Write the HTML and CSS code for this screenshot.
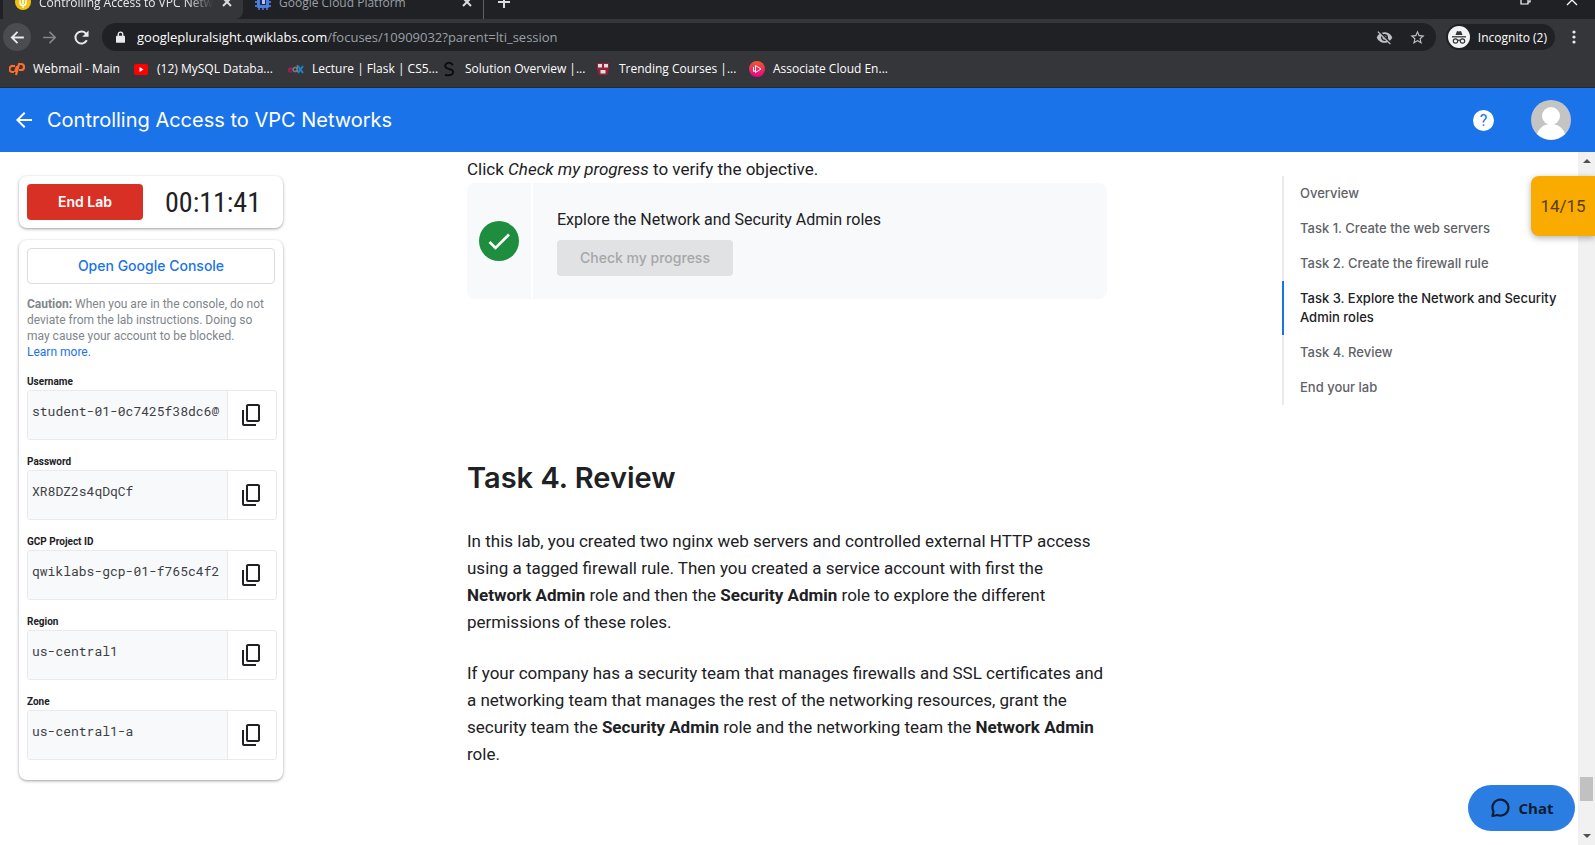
FILE: index.html
```html
<!DOCTYPE html>
<html lang="en">
<head>
<meta charset="utf-8">
<title>Controlling Access to VPC Networks</title>
<link rel="stylesheet" href="styles.css">
</head>
<body>
<svg class="defs" width="0" height="0" aria-hidden="true">
  <symbol id="i-copy" viewBox="0 0 24 24"><path fill="currentColor" d="M18 1H8C6.9 1 6 1.900 6 3v14c0 1.100.9 2 2 2h10c1.100 0 2-.9 2-2V3c0-1.100-.9-2-2-2zm0 16H8V3h10v14zM2 7h2v14h12v2H4c-1.100 0-2-.9-2-2V7z"/></symbol>
  <symbol id="i-x" viewBox="0 0 12 12"><path d="M2 2l8 8M10 2l-8 8" fill="none" stroke="currentColor" stroke-width="2"/></symbol>
  <symbol id="i-back" viewBox="0 0 24 24"><path fill="currentColor" d="M20 11H7.800l5.600-5.600L12 4l-8 8 8 8 1.400-1.400L7.800 13H20z"/></symbol>
</svg>
<header class="browser">
  <div class="tabs">
    <div class="tab tab-on">
      <svg class="fav" viewBox="0 0 16 16"><circle cx="8" cy="8" r="8" fill="#f4c20d"/><path d="M8 3v7M5 4v4.500a3 3 0 0 0 6 0V4M8 12v2" fill="none" stroke="#fff" stroke-width="1.500"/></svg>
      <span class="tab-name fade">Controlling Access to VPC Networks</span>
      <button class="tab-x" aria-label="Close tab"><svg viewBox="0 0 12 12"><use href="#i-x"/></svg></button>
    </div>
    <div class="tab">
      <svg class="fav" viewBox="0 0 16 16"><path d="M4 0v16M8 0v16M12 0v16M0 4h16M0 8h16M0 12h16" stroke="#5c8df0" stroke-width="1.300"/><rect x="2" y="2" width="12" height="12" rx="1" fill="#4a7de0"/><rect x="5" y="5" width="6" height="6" fill="#202a44"/><rect x="7" y="6" width="3" height="4" fill="#a9c4ff"/></svg>
      <span class="tab-name">Google Cloud Platform</span>
      <button class="tab-x" aria-label="Close tab"><svg viewBox="0 0 12 12"><use href="#i-x"/></svg></button>
    </div>
    <button class="new-tab" aria-label="New tab"><svg viewBox="0 0 14 14"><path d="M7 1v12M1 7h12" stroke="currentColor" stroke-width="2"/></svg></button>
    <div class="win">
      <button aria-label="Restore"><svg viewBox="0 0 12 12"><path d="M1 3h7v7H1zM3 3V1h7v7H8" fill="none" stroke="currentColor" stroke-width="1.200"/></svg></button>
      <button aria-label="Close window"><svg viewBox="0 0 12 12"><path d="M1 1l10 10M11 1L1 11" stroke="currentColor" stroke-width="1.300"/></svg></button>
    </div>
  </div>
  <div class="toolbar">
    <button class="nav-btn nav-on" aria-label="Back"><svg viewBox="0 0 24 24"><path d="M21 12H4M12 4l-8 8 8 8" fill="none" stroke="currentColor" stroke-width="2.600"/></svg></button>
    <button class="nav-btn dim" aria-label="Forward"><svg viewBox="0 0 24 24"><path d="M3 12h17M12 4l8 8-8 8" fill="none" stroke="currentColor" stroke-width="2.300"/></svg></button>
    <button class="nav-btn" aria-label="Reload"><svg viewBox="0 0 24 24"><path d="M19.500 16A8.500 8.500 0 1 1 18 6l2 2.500" fill="none" stroke="currentColor" stroke-width="2.800"/><path d="M22 2v9h-9z" fill="currentColor"/></svg></button>
    <div class="omni">
      <svg class="lock" viewBox="0 0 10 13"><rect y="5" width="10" height="8" rx="1" fill="#e8eaed"/><path d="M2.500 6V3.500a2.500 2.500 0 0 1 5 0V6" fill="none" stroke="#e8eaed" stroke-width="1.500"/></svg>
      <span class="url"><span class="host">googlepluralsight.qwiklabs.com</span>/focuses/10909032?parent=lti_session</span>
      <button class="omni-btn" aria-label="Third-party cookies blocked"><svg viewBox="0 0 24 24"><path fill="#bdc1c6" d="M12 7a5 5 0 0 1 5 5c0 .65-.13 1.260-.36 1.830l2.920 2.920A11.800 11.800 0 0 0 23 12c-1.730-4.390-6-7.500-11-7.500-1.400 0-2.740.25-3.980.7l2.160 2.160A4.900 4.900 0 0 1 12 7zM2 4.270l2.740 2.740A11.800 11.800 0 0 0 1 12c1.730 4.390 6 7.500 11 7.500 1.550 0 3.030-.3 4.380-.84L19.730 22 21 20.730 3.270 3zM7.530 9.800l1.550 1.550a3 3 0 0 0 3.570 3.570l1.550 1.550A5 5 0 0 1 7.530 9.800zm4.310-.78l3.150 3.150.02-.16a3 3 0 0 0-3-3z"/></svg></button>
      <button class="omni-btn" aria-label="Bookmark this tab"><svg viewBox="0 0 24 24"><path fill="#bdc1c6" d="M22 9.240l-7.190-.62L12 2 9.190 8.630 2 9.240l5.460 4.730L5.820 21 12 17.270 18.180 21l-1.630-7.030zM12 15.400l-3.760 2.270 1-4.280-3.320-2.880 4.380-.38L12 6.100l1.710 4.040 4.380.38-3.320 2.880 1 4.280z"/></svg></button>
    </div>
    <button class="incog"><svg viewBox="0 0 22 22"><circle cx="11" cy="11" r="11" fill="#f1f3f4"/><path d="M7.500 9L9 5l2 .6L13 5l1.500 4z" fill="#35363a"/><path d="M4 10.800h14" stroke="#35363a" stroke-width="1.300"/><g fill="none" stroke="#35363a" stroke-width="1.200"><circle cx="7.500" cy="15" r="2.200"/><circle cx="14.500" cy="15" r="2.200"/><path d="M9.700 14.500q1.300-.8 2.600 0"/></g></svg>Incognito (2)</button>
    <button class="more" aria-label="Menu"><svg viewBox="0 0 4 14"><circle cx="2" cy="2" r="1.600"/><circle cx="2" cy="7" r="1.600"/><circle cx="2" cy="12" r="1.600"/></svg></button>
  </div>
  <nav class="marks">
    <a href="#"><svg viewBox="0 0 16 16"><path d="M6 5H4a3 3 0 0 0-1 6h2M7 14l3-11h2a3 3 0 0 1 0 6h-2M8 5L6 11" fill="none" stroke="#ff6c2c" stroke-width="2.200"/></svg>Webmail - Main</a>
    <a href="#"><svg viewBox="0 0 16 16"><rect x="1" y="3" width="14" height="11" rx="2" fill="#f00"/><path d="M6.500 6v5l4-2.500z" fill="#fff"/></svg>(12) MySQL Databa...</a>
    <a href="#"><svg viewBox="0 0 16 16"><g fill="none" stroke-width="1.600"><path d="M1 8.500h3.500a2 2 0 1 0-.5 2" stroke="#9b2155"/><path d="M9.500 4v7M9 8a2 2 0 1 0 0 1" stroke="#777b85"/><path d="M10 5l5 7M15 5l-5 7" stroke="#1c83c6" stroke-width="2"/></g></svg>Lecture | Flask | CS5...</a>
    <a href="#"><svg viewBox="0 0 16 16"><path d="M12 4Q8 0 5 3t3 5q5 1 4 4t-8 2" fill="none" stroke="#0c0c0d" stroke-width="1.800"/></svg>Solution Overview |...</a>
    <a href="#"><svg viewBox="0 0 16 16"><path d="M2 2h12v6l-2 6H4L2 8z" fill="#98203a"/><g fill="#ddd"><rect x="3" y="3" width="4" height="3.500"/><rect x="9" y="3" width="4" height="3.500"/><rect x="5.500" y="9" width="5" height="3.500"/></g></svg>Trending Courses |...</a>
    <a href="#"><svg viewBox="0 0 16 16"><defs><linearGradient id="ps" x2="0" y2="1"><stop stop-color="#f15b2a"/><stop offset="1" stop-color="#ec008c"/></linearGradient></defs><circle cx="8" cy="8" r="8" fill="url(#ps)"/><path d="M6.500 4.500v7l5.500-3.500zM4.500 6v4.500l2-1" fill="none" stroke="#fff"/></svg>Associate Cloud En...</a>
  </nav>
</header>
<header class="appbar">
  <button class="app-back" aria-label="Back"><svg viewBox="0 0 24 24"><use href="#i-back"/></svg></button>
  <h1>Controlling Access to VPC Networks</h1>
  <button class="help" aria-label="Help">?</button>
  <button class="avatar" aria-label="Account"><svg viewBox="0 0 40 40"><circle cx="20" cy="20" r="20" fill="#c4c4c4"/><circle cx="20" cy="16" r="9" fill="#fff"/><path d="M6 34c2-6 7-10 14-10s12 4 14 10a20 20 0 0 1-28 0z" fill="#fff"/></svg></button>
</header>
<div class="page">
  <aside class="side">
    <section class="card control"><button class="end">End Lab</button><span class="timer">00:11:41</span></section>
    <section class="card details">
      <button class="open">Open Google Console</button>
      <p class="caution"><b>Caution:</b> When you are in the console, do not deviate from the lab instructions. Doing so may cause your account to be blocked. <a href="#">Learn more.</a></p>
      <div class="field"><label for="f1">Username</label><div class="box"><input id="f1" readonly value="student-01-0c7425f38dc6@"><button aria-label="Copy username"><svg viewBox="0 0 24 24"><use href="#i-copy"/></svg></button></div></div>
      <div class="field"><label for="f2">Password</label><div class="box"><input id="f2" readonly value="XR8DZ2s4qDqCf"><button aria-label="Copy password"><svg viewBox="0 0 24 24"><use href="#i-copy"/></svg></button></div></div>
      <div class="field"><label for="f3">GCP Project ID</label><div class="box"><input id="f3" readonly value="qwiklabs-gcp-01-f765c4f2"><button aria-label="Copy project ID"><svg viewBox="0 0 24 24"><use href="#i-copy"/></svg></button></div></div>
      <div class="field"><label for="f4">Region</label><div class="box"><input id="f4" readonly value="us-central1"><button aria-label="Copy region"><svg viewBox="0 0 24 24"><use href="#i-copy"/></svg></button></div></div>
      <div class="field"><label for="f5">Zone</label><div class="box"><input id="f5" readonly value="us-central1-a"><button aria-label="Copy zone"><svg viewBox="0 0 24 24"><use href="#i-copy"/></svg></button></div></div>
    </section>
  </aside>
  <main class="doc">
    <p>Click <em>Check my progress</em> to verify the objective.</p>
    <section class="activity">
      <div class="status"><svg viewBox="0 0 40 40" role="img" aria-label="Completed"><circle cx="20" cy="20" r="20" fill="#1e8e3e"/><path d="M10.500 21l6 6L30 13.500" fill="none" stroke="#fff" stroke-width="2.600"/></svg></div>
      <div class="step"><span>Explore the Network and Security Admin roles</span><button disabled>Check my progress</button></div>
    </section>
    <h2>Task 4. Review</h2>
    <p>In this lab, you created two nginx web servers and controlled external HTTP access using a tagged firewall rule. Then you created a service account with first the <b>Network Admin</b> role and then the <b>Security Admin</b> role to explore the different permissions of these roles.</p>
    <p>If your company has a security team that manages firewalls and SSL certificates and a networking team that manages the rest of the networking resources, grant the security team the <b>Security Admin</b> role and the networking team the <b>Network Admin</b> role.</p>
  </main>
  <nav class="outline">
    <a href="#">Overview</a>
    <a href="#">Task 1. Create the web servers</a>
    <a href="#">Task 2. Create the firewall rule</a>
    <a href="#" class="current">Task 3. Explore the Network and Security Admin roles</a>
    <a href="#">Task 4. Review</a>
    <a href="#">End your lab</a>
  </nav>
  <div class="scroll"><i class="up"></i><i class="thumb"></i><i class="down"></i></div>
  <div class="score">14/15</div>
  <button class="chat"><svg viewBox="0 0 20 20"><path d="M2.500 18l1-4.500a8 8 0 1 1 4 3.500z" fill="none" stroke="currentColor" stroke-width="2.200" stroke-linejoin="round"/></svg>Chat</button>
</div>
</body>
</html>
```
FILE: styles.css
```css
* { box-sizing: border-box; }
body { margin: 0; height: 100vh; display: flex; flex-direction: column; overflow: hidden; background: #fff; color: #202124; font-family: Roboto, "Liberation Sans", sans-serif; }
.defs { position: absolute; }
button { border: 0; padding: 0; background: none; color: inherit; font: inherit; }
svg { display: block; flex: none; }
a { color: #1a73e8; text-decoration: none; }

.browser { flex: none; background: #35363a; color: #e8eaed; font-family: "Open Sans", "Noto Sans", sans-serif; font-size: 12px; border-bottom: 1px solid #28292c; }
.tabs { display: flex; align-items: flex-end; height: 19px; overflow: hidden; background: #202124; padding-left: 3px; }
.tab { flex: none; display: flex; align-items: center; gap: 8px; width: 240px; height: 34px; padding: 0 10px 0 12px; color: #9aa0a6; }
.tab-on { background: #35363a; color: #e8eaed; border-radius: 0 0 8px 0; }
.fav { width: 16px; height: 16px; }
.tab-name { flex: 1; white-space: nowrap; overflow: hidden; }
.fade { mask-image: linear-gradient(90deg, #000 85%, transparent); }
.tab-x svg { width: 12px; height: 12px; }
.tab-x { color: #dadce0; }
.new-tab { flex: none; height: 34px; padding: 0 13px; border-left: 1px solid #5f6368; color: #dadce0; }
.new-tab svg { width: 14px; height: 14px; }
.win { margin-left: auto; flex: none; display: flex; gap: 34px; height: 38px; align-items: center; padding-right: 17px; color: #fff; }
.win svg { width: 12px; height: 12px; }

.toolbar { display: flex; align-items: center; height: 36px; padding: 0 16px 0 3px; }
.nav-btn { flex: none; width: 28px; height: 28px; border-radius: 14px; display: grid; place-items: center; margin-right: 4px; color: #e8eaed; }
.nav-btn svg { width: 17px; height: 17px; }
.nav-on { background: #4b4c50; }
.dim { color: #85878b; }
.omni { flex: 1; min-width: 0; display: flex; align-items: center; gap: 12px; height: 28px; margin: 0 10px 0 3px; padding: 0 10px 0 14px; border-radius: 14px; background: #202124; }
.lock { width: 9px; height: 12px; }
.url { flex: 1; min-width: 0; white-space: nowrap; overflow: hidden; font-size: 13px; color: #9aa0a6; }
.host { color: #fff; }
.omni-btn svg { width: 17px; height: 17px; }
.omni-btn { margin-left: 4px; }
.incog { flex: none; display: flex; align-items: center; gap: 8px; height: 26px; padding: 0 8px 0 2px; border-radius: 13px; background: #202124; color: #fff; }
.incog svg { width: 22px; height: 22px; }
.more { margin-left: 14px; padding: 0 3px; }
.more svg { width: 4px; height: 14px; fill: #e8eaed; }
.marks { display: grid; grid-template-columns: 124px 155px 153px 154px 154px auto; height: 32px; padding: 0 9px 5px; align-items: center; }
.marks a { display: flex; align-items: center; gap: 8px; white-space: nowrap; color: #fff; }
.marks svg { width: 16px; height: 16px; }

.appbar { flex: none; display: flex; align-items: center; height: 64px; padding: 0 24px 0 12px; background: #1a73e8; color: #fff; }
.app-back svg { width: 24px; height: 24px; }
.appbar h1 { flex: 1; margin: 0 0 0 11px; font: 400 20px Inter, sans-serif; }
.help { width: 21px; height: 21px; border-radius: 50%; background: #fff; color: #1a73e8; font-size: 16px; line-height: 21px; margin-right: 37px; }
.avatar svg { width: 40px; height: 40px; }

.page { position: relative; flex: 1; min-height: 0; overflow: hidden; display: grid; grid-template-columns: 292px minmax(0, 1fr) 296px 17px; }
.side { padding: 24px 9px 0 19px; }
.card { border-radius: 8px; background: #fff; box-shadow: 0 1px 3px rgba(60, 64, 67, .5); padding: 8px; }
.control { display: flex; align-items: center; height: 52px; margin-bottom: 12px; }
.end { width: 116px; height: 36px; padding-bottom: 2px; border-radius: 4px; background: #d93025; color: #fff; font: 600 14px Inter, sans-serif; }
.timer { flex: 1; padding-left: 8px; text-align: center; font: 400 28px "Roboto Condensed", Roboto, sans-serif; }
.details { padding-bottom: 20px; }
.open { width: 100%; height: 36px; padding-bottom: 2px; border: 1px solid #dadce0; border-radius: 4px; color: #1a73e8; font: 500 14px Inter, sans-serif; }
.caution { margin: 12px 0 16px; font-size: 12px; line-height: 16px; color: #80868b; }
.caution a { display: block; }
.field { margin-bottom: 16px; }
.field:last-child { margin-bottom: 0; }
.field label { display: block; height: 14px; font-size: 10px; line-height: 11px; font-weight: 700; }
.box { display: flex; height: 50px; margin-right: -2px; border: 1px solid #e8eaed; border-radius: 3px; overflow: hidden; }
.box input { flex: 1; min-width: 0; border: 0; border-right: 1px solid #e8eaed; padding: 0 0 8px 4px; background: #f8f9fa; color: #3c4043; font: 13px "Roboto Mono", "Liberation Mono", monospace; outline: 0; }
.box button { width: 48px; display: grid; place-items: center; }
.box svg { width: 24px; height: 24px; }

.doc { width: 100%; max-width: 640px; margin: 0 auto; padding-top: 4px; font-size: 17px; line-height: 27px; }
.doc p { margin: 0 0 24px; }
.doc p:first-child { margin: 0; }
.activity { display: flex; gap: 2px; height: 116px; margin-bottom: 160px; border-radius: 8px; overflow: hidden; }
.status { width: 64px; display: grid; place-items: center; background: #f8f9fa; }
.status svg { width: 40px; height: 40px; }
.step { flex: 1; padding: 23px 24px; background: #f8f9fa; font-size: 16px; }
.step span { display: block; margin-bottom: 7px; }
.step button { height: 36px; padding: 0 23px 2px; border-radius: 4px; background: #e1e2e3; color: #a5a7a9; font: 500 14px Inter, sans-serif; }
.doc h2 { margin: 0 0 31px; font: 600 29px/38px Inter, sans-serif; }

.outline { align-self: start; margin-top: 24px; box-shadow: inset 2px 0 #e8eaed; font: 500 13px/19px Inter, sans-serif; }
.outline a { display: block; padding: 8px 16px; border-left: 2px solid transparent; color: #5f6368; }
.outline .current { color: #202124; border-color: #1a73e8; }

.scroll { display: flex; flex-direction: column; align-items: center; padding: 7px 0; background: #f1f1f1; }
.up, .down { border: 4px solid transparent; }
.up { border-top: 0; border-bottom-color: #505050; }
.down { border-bottom: 0; border-top-color: #505050; }
.thumb { width: 13px; height: 24px; margin: auto 0 33px; background: #c1c1c1; }
.score { position: absolute; top: 24px; right: 0; width: 64px; height: 60px; border-radius: 8px 0 0 8px; background: #f9ab00; color: #5a3d0c; font-size: 17px; line-height: 60px; text-align: center; box-shadow: 0 2px 6px rgba(60, 64, 67, .4); }
.chat { position: absolute; right: 20px; bottom: 14px; display: flex; align-items: center; justify-content: center; gap: 9px; width: 107px; height: 46px; border-radius: 23px; background: #2b7de1; color: #0c1c33; font: 700 15px "Open Sans", sans-serif; }
.chat svg { width: 20px; height: 20px; }
```
